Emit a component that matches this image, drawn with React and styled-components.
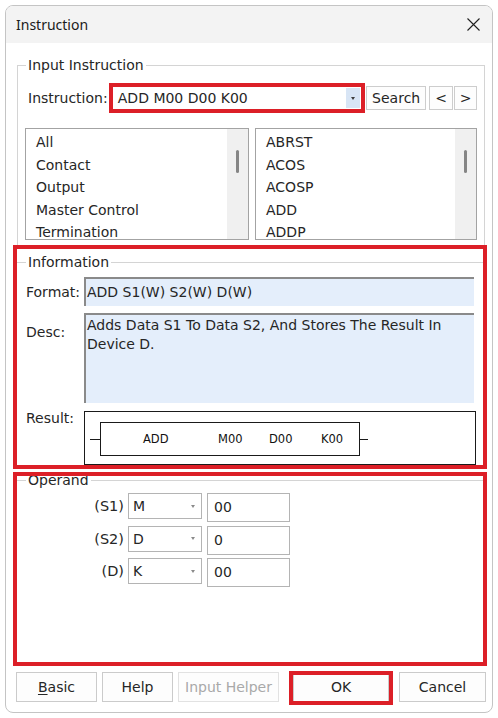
import React from "react";
import styled, { createGlobalStyle } from "styled-components";

const RED = "#dc1f27";
const INK = "#262626";

const GlobalStyle = createGlobalStyle`
  html, body { margin: 0; padding: 0; background: #ffffff; }
  body {
    font-family: "DejaVu Sans", Verdana, sans-serif;
    font-size: 14px;
    color: ${INK};
  }
  * { box-sizing: border-box; }
`;

const Page = styled.div`
  width: 498px;
  height: 718px;
  padding: 5px;
`;

const Window = styled.div`
  width: 488px;
  height: 708px;
  border: 1px solid #c4c4c4;
  border-radius: 8px;
  overflow: hidden;
  background: #ffffff;
  display: flex;
  flex-direction: column;
`;

const TitleBar = styled.div`
  height: 37px;
  flex: none;
  background: #f3f3f3;
  display: flex;
  align-items: center;
  justify-content: space-between;
  padding: 0 12px 0 10px;
`;

const Title = styled.span`
  font-family: "Noto Sans", "Open Sans", sans-serif;
  font-size: 14px;
  color: #1a1a1a;
`;

const CloseIcon = styled.svg`
  width: 13px;
  height: 13px;
  display: block;
`;

const Group = styled.fieldset`
  margin: 0;
  border: 1px solid #d4d4d4;
  min-inline-size: 0;
`;

const TopGroup = styled(Group)`
  margin: 13px 7px 0 11px;
  padding: 9px 7px 5px 7px;
`;

const Legend = styled.legend`
  padding: 0 2px;
  margin-left: ${(p) => p.$indent || 0}px;
  line-height: 18px;
  font-size: 14px;
  color: ${INK};
`;

const InstructionRow = styled.div`
  height: 30px;
  display: flex;
  align-items: center;
`;

const RowLabel = styled.span`
  width: 85px;
  margin-left: 3px;
  white-space: nowrap;
`;

const Combo = styled.div`
  width: 249px;
  height: 22px;
  background: #ffffff;
  outline: 4px solid ${RED};
  display: flex;
  align-items: stretch;
  padding: 1px 1px 1px 5px;
`;

const ComboText = styled.span`
  flex: 1;
  line-height: 20px;
`;

const DropButton = styled.span`
  width: 14px;
  background: #d8e5f5;
  display: flex;
  align-items: center;
  justify-content: center;
`;

const Arrow = styled.span`
  width: 0;
  height: 0;
  border-left: 2.5px solid transparent;
  border-right: 2.5px solid transparent;
  border-top: 3px solid ${(p) => p.$color || "#3c3c3c"};
`;

const SmallButton = styled.button`
  width: ${(p) => p.$w}px;
  height: 24px;
  margin-left: ${(p) => p.$ml || 0}px;
  padding: 0;
  background: #fdfdfd;
  border: 1px solid #cdcdcd;
  font-family: "DejaVu Sans", Verdana, sans-serif;
  font-size: 14px;
  color: ${INK};
`;

const Lists = styled.div`
  margin-top: 15px;
  height: 112px;
  display: grid;
  grid-template-columns: 224px 222px;
  column-gap: 6px;
`;

const ListBox = styled.div`
  border: 1px solid #a3a3a3;
  display: flex;
  overflow: hidden;
  background: #ffffff;
`;

const ListItems = styled.div`
  flex: 1;
  padding: 2px 0 0 ${(p) => p.$pl || 10}px;
  line-height: 22.5px;
  white-space: nowrap;
`;

const ScrollTrack = styled.div`
  width: 21px;
  background: #f0f0f0;
  display: flex;
  justify-content: center;
  padding-top: 21px;
`;

const ScrollThumb = styled.div`
  width: 3px;
  height: 23px;
  border-radius: 2px;
  background: #858585;
`;

const Marked = styled.div`
  display: flow-root;
  outline: 4px solid ${RED};
  margin: ${(p) => p.$mt}px 9px 0 11px;
  height: ${(p) => (p.$h ? `${p.$h}px` : "auto")};
`;

const InfoGroup = styled(Group)`
  margin: 4px -1px 0 -1px;
  padding: 6px 7px 0 9px;
  border-bottom: none;
`;

const InfoRow = styled.div`
  display: grid;
  grid-template-columns: 58px 1fr;
  margin-top: ${(p) => p.$mt || 0}px;
  height: ${(p) => p.$h}px;
`;

const InfoLabel = styled.span`
  line-height: 18px;
  align-self: ${(p) => p.$align || "start"};
  margin-top: ${(p) => p.$mt || 0}px;
`;

const ReadOnlyField = styled.div`
  margin-right: 2px;
  background: #e4eefb;
  border-top: 2px solid #8a8a8a;
  border-left: 2px solid #8a8a8a;
  padding: ${(p) => p.$pad || "4px 0 0 1px"};
  line-height: 19px;
  white-space: nowrap;
`;

const ResultBox = styled.div`
  border: 1px solid #1a1a1a;
  background: #ffffff;
  padding-left: 5px;
  padding-top: 10px;
`;

const Ladder = styled.div`
  display: flex;
  align-items: center;
  height: 34px;
`;

const Stub = styled.span`
  width: ${(p) => p.$w}px;
  height: 1px;
  background: #1a1a1a;
`;

const LadderBox = styled.div`
  width: 260px;
  height: 34px;
  border: 1px solid #1a1a1a;
  display: grid;
  grid-template-columns: 75px 51px 52px auto;
  align-items: center;
  padding-left: 42px;
  font-size: 11.5px;
  color: #111;
`;

const OperandGroup = styled(Group)`
  margin: -5px -1px 0 -1px;
  height: 192px;
  padding: 4px 0 0 2px;
`;

const OperandRows = styled.div`
  display: flex;
  flex-direction: column;
  gap: 3.5px;
`;

const OperandRow = styled.div`
  display: flex;
  align-items: flex-start;
  height: 29px;
`;

const OperandLabel = styled.span`
  width: 105px;
  text-align: right;
  line-height: 26px;
  font-size: 14.5px;
`;

const DeviceCombo = styled.div`
  width: 74px;
  height: 26px;
  margin-left: 4px;
  border: 1px solid #b4b4b4;
  background: #ffffff;
  display: flex;
  align-items: center;
  padding: 0 6px 0 4px;
`;

const DeviceText = styled.span`
  flex: 1;
`;

const ValueField = styled.div`
  width: 83px;
  height: 29px;
  margin-left: 5px;
  border: 1px solid #b4b4b4;
  background: #ffffff;
  padding: 3px 0 0 6px;
  line-height: 20px;
`;

const ButtonRow = styled.div`
  margin-top: 10px;
  padding-left: 10px;
  display: flex;
  height: 30px;
`;

const DialogButton = styled.button`
  position: relative;
  width: ${(p) => p.$w}px;
  height: 30px;
  margin-left: ${(p) => p.$ml || 0}px;
  padding: 0;
  background: #fdfdfd;
  border: 1px solid ${(p) => (p.disabled ? "#e2e2e2" : "#cbcbcb")};
  font-family: "DejaVu Sans", Verdana, sans-serif;
  font-size: 14px;
  color: ${(p) => (p.disabled ? "#a9a9a9" : INK)};
  ${(p) =>
    p.$marked &&
    `
    &::after {
      content: "";
      position: absolute;
      top: -2px;
      bottom: -4px;
      left: -5px;
      right: -5px;
      border: 4px solid ${RED};
    }
  `}
`;

const Mnemonic = styled.span`
  text-decoration: underline;
  text-underline-offset: 2px;
`;

const leftItems = ["All", "Contact", "Output", "Master Control", "Termination"];
const rightItems = ["ABRST", "ACOS", "ACOSP", "ADD", "ADDP"];

const operands = [
  { label: "(S1)", device: "M", value: "00" },
  { label: "(S2)", device: "D", value: "0" },
  { label: "(D)", device: "K", value: "00" },
];

export default function App() {
  return (
    <>
      <GlobalStyle />
      <Page>
        <Window>
          <TitleBar>
            <Title>Instruction</Title>
            <CloseIcon viewBox="0 0 13 13">
              <path d="M0.5 0.5 L12.5 12.5 M12.5 0.5 L0.5 12.5" stroke="#202020" strokeWidth="1.1" fill="none" />
            </CloseIcon>
          </TitleBar>

          <TopGroup>
            <Legend $indent={1}>Input Instruction</Legend>
            <InstructionRow>
              <RowLabel>Instruction:</RowLabel>
              <Combo>
                <ComboText>ADD M00 D00 K00</ComboText>
                <DropButton>
                  <Arrow />
                </DropButton>
              </Combo>
              <SmallButton $w={60} $ml={5}>Search</SmallButton>
              <SmallButton $w={24} $ml={3}>&lt;</SmallButton>
              <SmallButton $w={23} $ml={1}>&gt;</SmallButton>
            </InstructionRow>
            <Lists>
              <ListBox>
                <ListItems>
                  {leftItems.map((t) => (
                    <div key={t}>{t}</div>
                  ))}
                </ListItems>
                <ScrollTrack>
                  <ScrollThumb />
                </ScrollTrack>
              </ListBox>
              <ListBox>
                <ListItems $pl={10}>
                  {rightItems.map((t) => (
                    <div key={t}>{t}</div>
                  ))}
                </ListItems>
                <ScrollTrack>
                  <ScrollThumb />
                </ScrollTrack>
              </ListBox>
            </Lists>
          </TopGroup>

          <Marked $mt={3}>
            <InfoGroup>
              <Legend $indent={0}>Information</Legend>
              <InfoRow $h={29}>
                <InfoLabel $align="center">Format:</InfoLabel>
                <ReadOnlyField>ADD S1(W) S2(W) D(W)</ReadOnlyField>
              </InfoRow>
              <InfoRow $h={90} $mt={7}>
                <InfoLabel $mt={10}>Desc:</InfoLabel>
                <ReadOnlyField $pad="1px 0 0 1px">
                  Adds Data S1 To Data S2, And Stores The Result In
                  <br />
                  Device D.
                </ReadOnlyField>
              </InfoRow>
              <InfoRow $h={54} $mt={8}>
                <InfoLabel $mt={-2}>Result:</InfoLabel>
                <ResultBox>
                  <Ladder>
                    <Stub $w={10} />
                    <LadderBox>
                      <span>ADD</span>
                      <span>M00</span>
                      <span>D00</span>
                      <span>K00</span>
                    </LadderBox>
                    <Stub $w={8} />
                  </Ladder>
                </ResultBox>
              </InfoRow>
            </InfoGroup>
          </Marked>

          <Marked $mt={11} $h={186}>
            <OperandGroup>
              <Legend $indent={7}>Operand</Legend>
              <OperandRows>
                {operands.map((o) => (
                  <OperandRow key={o.label}>
                    <OperandLabel>{o.label}</OperandLabel>
                    <DeviceCombo>
                      <DeviceText>{o.device}</DeviceText>
                      <Arrow $color="#8a8a8a" />
                    </DeviceCombo>
                    <ValueField>{o.value}</ValueField>
                  </OperandRow>
                ))}
              </OperandRows>
            </OperandGroup>
          </Marked>

          <ButtonRow>
            <DialogButton $w={81}>
              <Mnemonic>B</Mnemonic>asic
            </DialogButton>
            <DialogButton $w={71} $ml={5}>Help</DialogButton>
            <DialogButton $w={101} $ml={5} disabled>
              Input Helper
            </DialogButton>
            <DialogButton $w={96} $ml={14} $marked>
              OK
            </DialogButton>
            <DialogButton $w={87} $ml={10}>Cancel</DialogButton>
          </ButtonRow>
        </Window>
      </Page>
    </>
  );
}
